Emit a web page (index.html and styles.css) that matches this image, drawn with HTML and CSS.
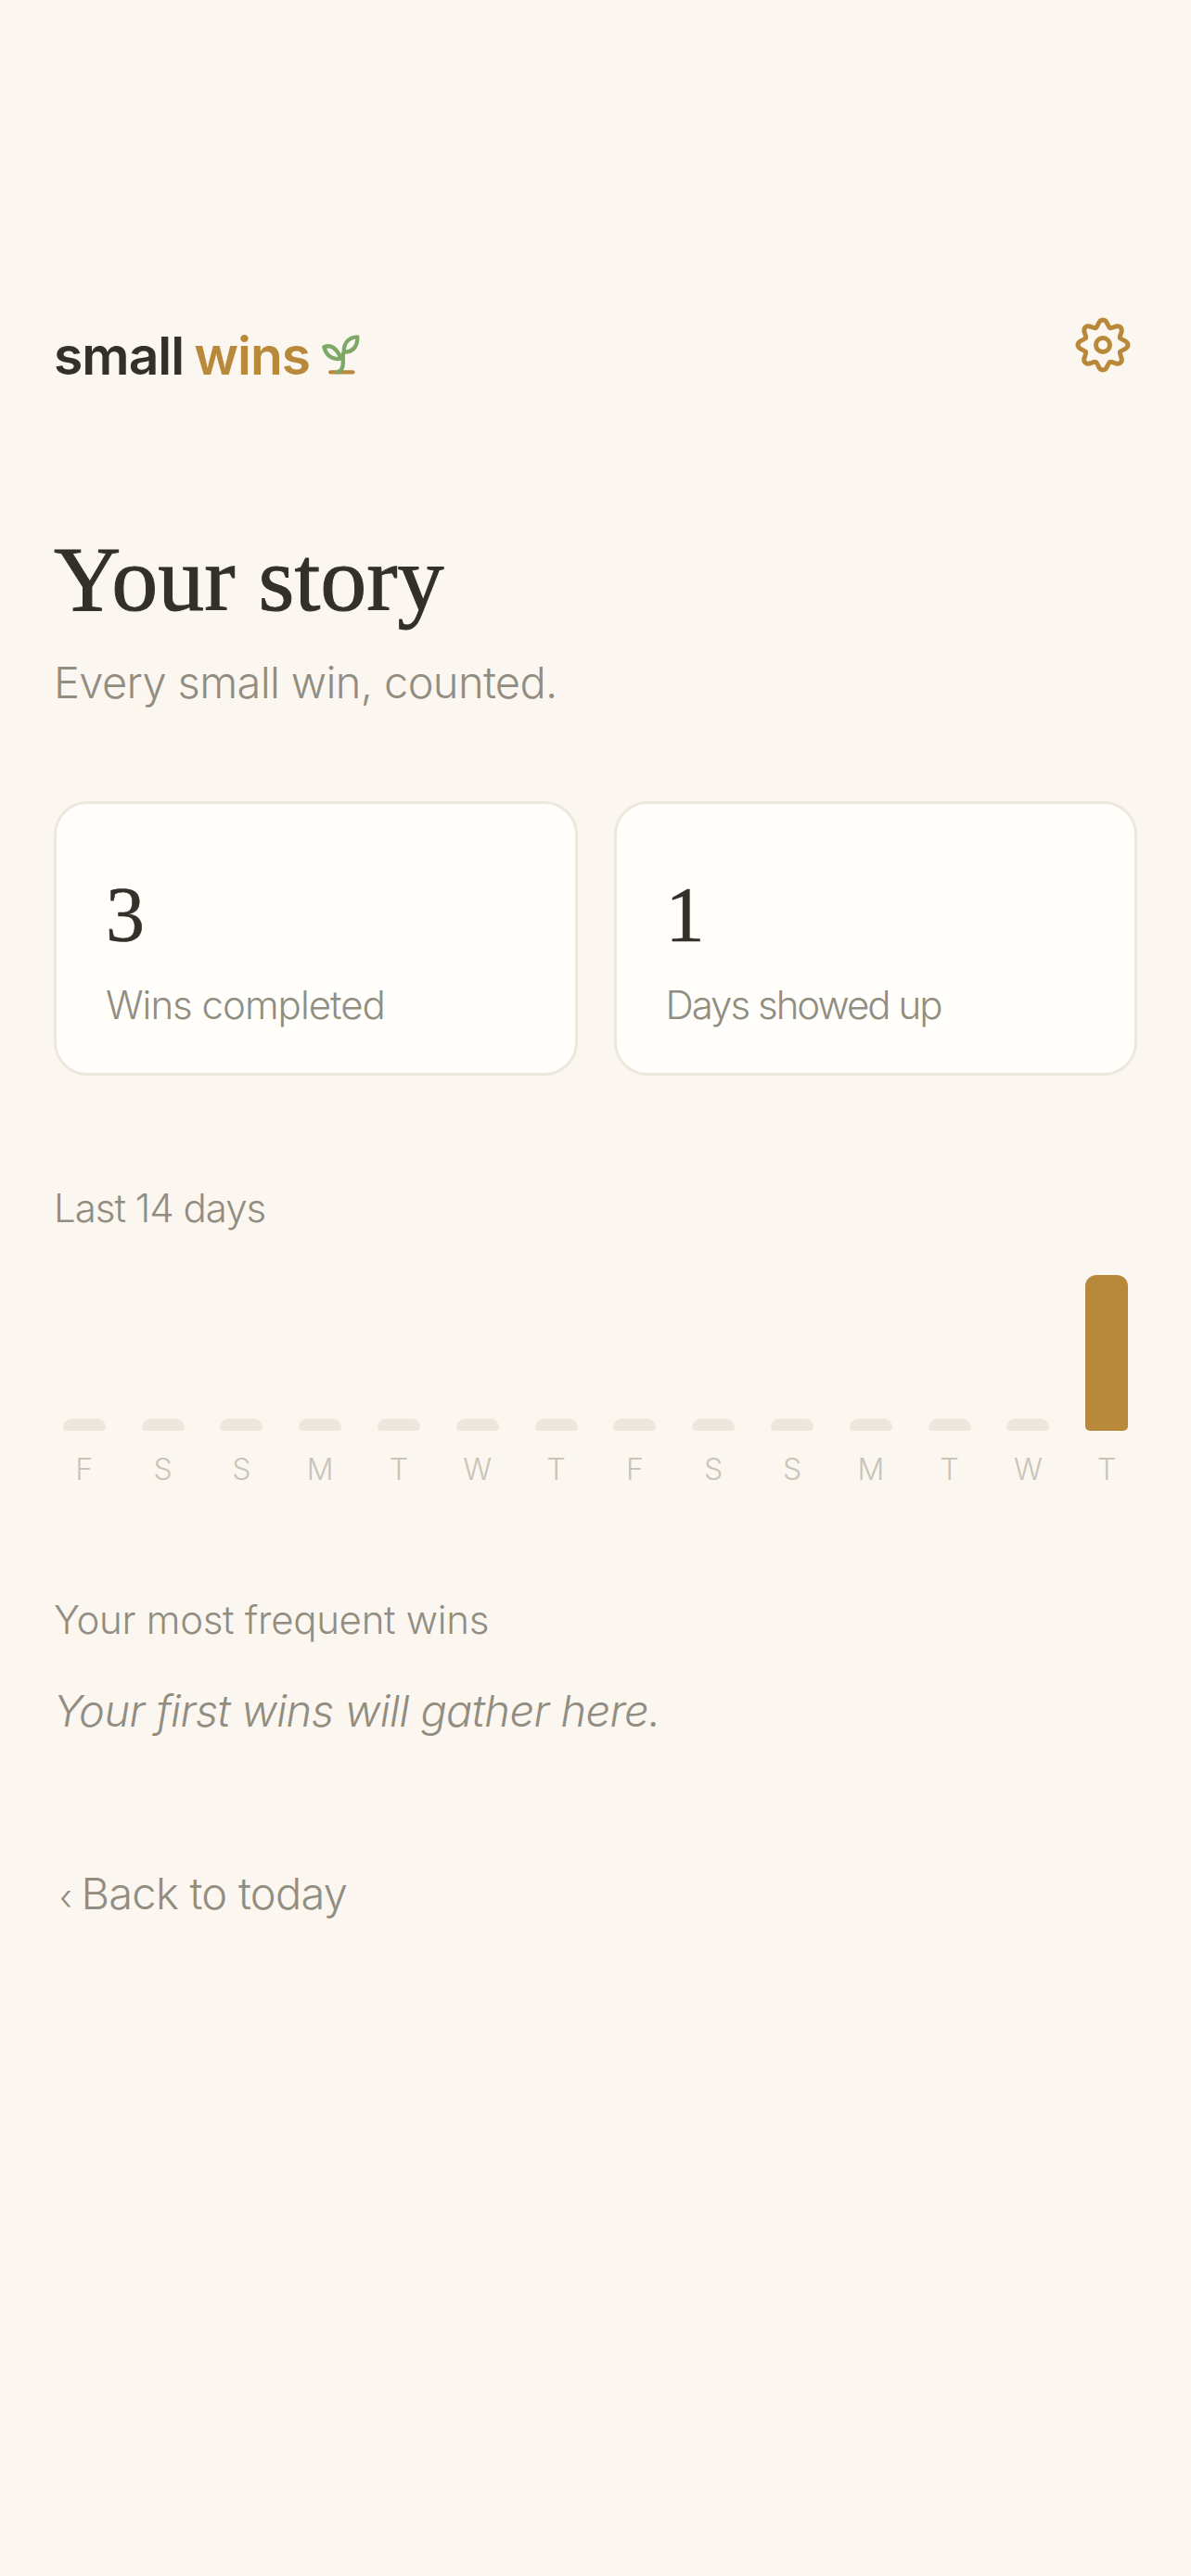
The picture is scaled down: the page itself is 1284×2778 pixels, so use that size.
FILE: index.html
```html
<!DOCTYPE html>
<html lang="en">
<head>
  <meta charset="UTF-8" />
  <meta name="viewport" content="width=device-width, initial-scale=1.0"/>
  <title>Your story</title>
  <link rel="stylesheet" href="styles.css">
</head>
<body>

<svg class="defs" width="0" height="0">
  <path id="lobe" d="M-7.65 -18.5C-4.6 -19.8 -5.5 -27 0 -27C5.5 -27 4.6 -19.8 7.65 -18.5"/>
</svg>

<header class="top">
  <div class="logo">
    <span class="logo-small">small</span>
    <span class="logo-wins">wins</span>
    <svg class="sprout" viewBox="30 5 140 145" fill="none" stroke-linecap="round" stroke-linejoin="round">
      <path class="sprout-base" d="M67 135H139"/>
      <path class="sprout-leaf" d="M90 135C115 125 105 100 108 75"/>
      <path class="sprout-leaf" d="M46 54C68 44 88 58 101 91C76 96 55 85 46 54Z"/>
      <path class="sprout-leaf" d="M154 21C130 22 110 36 110 70C140 71 155 50 154 21Z"/>
    </svg>
  </div>
  <svg class="gear" viewBox="-32 -32 64 64" fill="none" stroke-linecap="round">
    <use href="#lobe"/>
    <use href="#lobe" transform="rotate(45)"/>
    <use href="#lobe" transform="rotate(90)"/>
    <use href="#lobe" transform="rotate(135)"/>
    <use href="#lobe" transform="rotate(180)"/>
    <use href="#lobe" transform="rotate(225)"/>
    <use href="#lobe" transform="rotate(270)"/>
    <use href="#lobe" transform="rotate(315)"/>
    <circle r="7.5"/>
  </svg>
</header>

<main>
  <h1>Your story</h1>
  <p class="tagline">Every small win, counted.</p>

  <div class="stats">
    <div class="card">
      <div class="card-num">3</div>
      <div class="card-label">Wins completed</div>
    </div>
    <div class="card">
      <div class="card-num">1</div>
      <div class="card-label card-label-tight">Days showed up</div>
    </div>
  </div>

  <div class="section-label chart-label">Last 14 days</div>
  <div class="chart">
    <div class="day"><div class="bar"></div><span>F</span></div>
    <div class="day"><div class="bar"></div><span>S</span></div>
    <div class="day"><div class="bar"></div><span>S</span></div>
    <div class="day"><div class="bar"></div><span>M</span></div>
    <div class="day"><div class="bar"></div><span>T</span></div>
    <div class="day"><div class="bar"></div><span>W</span></div>
    <div class="day"><div class="bar"></div><span>T</span></div>
    <div class="day"><div class="bar"></div><span>F</span></div>
    <div class="day"><div class="bar"></div><span>S</span></div>
    <div class="day"><div class="bar"></div><span>S</span></div>
    <div class="day"><div class="bar"></div><span>M</span></div>
    <div class="day"><div class="bar"></div><span>T</span></div>
    <div class="day"><div class="bar"></div><span>W</span></div>
    <div class="day"><div class="bar bar-full"></div><span>T</span></div>
  </div>

  <div class="section-label freq-label">Your most frequent wins</div>
  <p class="empty">Your first wins will gather here.</p>

  <a class="back" href="#"><span class="back-arrow">‹</span> Back to today</a>
</main>

</body>
</html>
```

FILE: styles.css
```css
* { box-sizing: border-box; }
html, body { height: 100%; }
body { margin: 0; background: #fbf6f0; color: #33302a; font-family: Inter, "Liberation Sans", sans-serif; padding: 340px 58px 0; }
.defs { position: absolute; }
#lobe { stroke: #b8893a; }

.top { display: flex; justify-content: space-between; align-items: flex-start; height: 231px; }
.logo { display: flex; align-items: center; gap: 11px; height: 86px; font-size: 57px; font-weight: 600; letter-spacing: -1px; }
.logo-wins { color: #b8893a; }
.sprout { width: 46.67px; height: 48.33px; margin: -2px 0 0 -1px; }
.sprout path { stroke-width: 13; }
.sprout-base { stroke: #b8893a; }
.sprout-leaf { stroke: #7fa866; }
.gear { width: 64px; height: 64px; margin: 0 5px 0 0; stroke: #b8893a; stroke-width: 5; }

h1 { margin: 0; font-family: "Liberation Serif", serif; font-weight: 400; font-size: 100px; line-height: 108px; -webkit-text-stroke: 1px #33302a; }
.tagline { margin: 28px 0 0; font-size: 47px; font-weight: 300; letter-spacing: -0.65px; color: #918d80; }

.stats { display: grid; grid-template-columns: 1fr 1fr; gap: 39px; margin-top: 100px; }
.card { height: 296px; padding: 72px 53px 0; background: #fffefa; border: 3px solid #ede8dd; border-radius: 36px; }
.card-num { font-family: "Liberation Serif", serif; font-size: 84px; line-height: 96px; -webkit-text-stroke: 0.6px #33302a; }
.card-label { margin-top: 23px; font-size: 42px; font-weight: 300; letter-spacing: -1px; color: #918d80; }
.card-label-tight { letter-spacing: -2px; }

.section-label { font-size: 42px; font-weight: 300; color: #918d80; }
.chart-label { margin-top: 117px; letter-spacing: -1px; }
.chart { display: grid; grid-template-columns: repeat(14, 1fr); gap: 19.4px; margin-top: 46px; }
.day { display: flex; flex-direction: column; align-items: center; justify-content: flex-end; }
.bar { width: 46px; height: 13px; flex-shrink: 0; background: #ece7dc; border-radius: 12px 12px 5px 5px; }
.bar-full { height: 168px; margin-top: 1px; background: #b8893a; }
.day span { margin-top: 24px; font-size: 32px; line-height: 36px; font-weight: 300; color: #c8c4b6; }

.freq-label { margin-top: 118px; letter-spacing: -0.3px; }
.empty { margin: 44px 0 0; font-size: 47px; font-weight: 300; font-style: italic; letter-spacing: -0.6px; color: #918d80; }
.back { display: block; margin-top: 140px; padding-left: 6px; font-size: 47px; font-weight: 300; letter-spacing: -0.75px; color: #918d80; text-decoration: none; }
.back-arrow { font-size: 38px; margin-right: -2px; }
```
